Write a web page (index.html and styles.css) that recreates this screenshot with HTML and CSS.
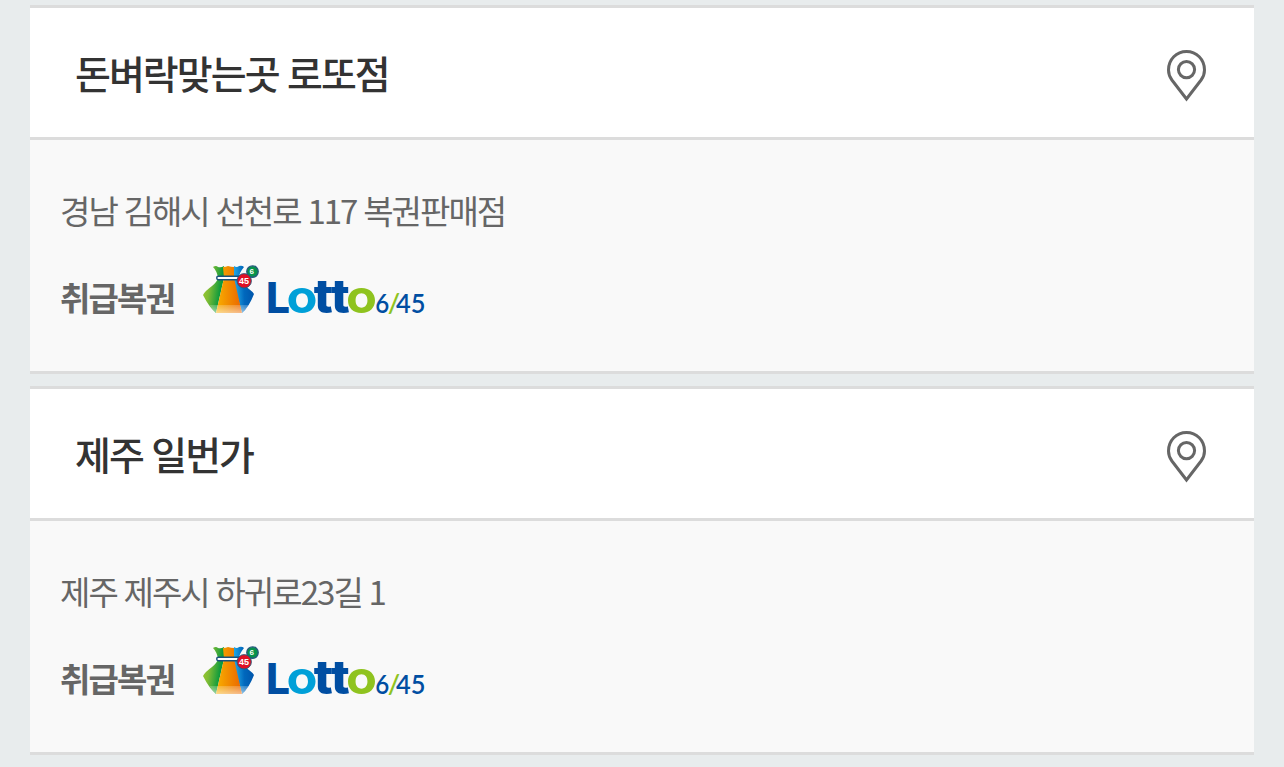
FILE: index.html
```html
<!DOCTYPE html>
<html lang="ko">
<head>
    <meta charset="UTF-8">
    <meta name="viewport" content="width=device-width, initial-scale=1.0">
    <title>로또 판매점</title>
    <link rel="stylesheet" href="styles.css">
</head>
<body>
    <!-- Shared icons -->
    <svg class="sprite" width="0" height="0">
        <defs>
            <linearGradient id="bagGreen" x1="0" y1="0" x2="1" y2="0.3">
                <stop offset="0" stop-color="#a5cb2c"/>
                <stop offset="0.4" stop-color="#7fbc35"/>
                <stop offset="0.9" stop-color="#0c9a3c"/>
            </linearGradient>
            <linearGradient id="bagOrange" x1="0" y1="0" x2="1" y2="0">
                <stop offset="0" stop-color="#f9b000"/>
                <stop offset="0.5" stop-color="#f18a00"/>
                <stop offset="1" stop-color="#ea6500"/>
            </linearGradient>
            <linearGradient id="bagBlue" x1="0" y1="0.1" x2="1" y2="0">
                <stop offset="0" stop-color="#2ab4ec"/>
                <stop offset="0.5" stop-color="#0068bd"/>
                <stop offset="1" stop-color="#0052a8"/>
            </linearGradient>
            <linearGradient id="bagFade" x1="0" y1="0" x2="0" y2="1">
                <stop offset="0" stop-color="#fff" stop-opacity="0.2"/>
                <stop offset="1" stop-color="#fff" stop-opacity="0.55"/>
            </linearGradient>
            <symbol id="pin" viewBox="0 0 40 52">
                <path d="M19.5 49 L4.9 30 C2.7 27 1.5 24 1.5 20 C1.5 9.5 9.5 1.5 19.5 1.5 C29.5 1.5 37.5 9.5 37.5 20 C37.5 24 36.3 27 34.1 30 Z" fill="none" stroke="#666" stroke-width="3"/>
                <circle cx="19.5" cy="19.6" r="8.1" fill="none" stroke="#666" stroke-width="3"/>
            </symbol>
            <symbol id="lotto" viewBox="0 0 224 50">
                <path d="M10 2 Q13 0 15 2 Q18 3 21 1 L21 13 L13 48 Q6 42 0 30 Q2 26 9 21 Q14 17 15 13 Q14 6 10 2 Z" fill="url(#bagGreen)"/>
                <path d="M31 1 Q34 3 36 1 Q39 0 41 2 Q36 8 36 13 Q39 19 46 24 Q50 27 51 29 Q46 42 39 48 L34 30 L29 12 Z" fill="url(#bagBlue)"/>
                <path d="M20 2 Q23 2 25 1 Q28 2 31 2 L31 13 L39 48 H13 L21 13 Z" fill="url(#bagOrange)"/>
                <path d="M6.5 40 H45.5 Q42 46 39 48 H13 Q9 45 6.5 40 Z" fill="url(#bagFade)"/>
                <rect x="13.7" y="11.3" width="25" height="3.4" rx="1.7" fill="#fff" stroke="#16527c" stroke-width="1.4"/>
                <circle cx="49.5" cy="6.6" r="5.7" fill="#07924b" stroke="#24597c" stroke-width="1.4"/>
                <circle cx="41.2" cy="15.8" r="7.2" fill="#df1025" stroke="#24597c" stroke-width="0.9"/>
                <text class="ball-num" x="48.7" y="9.2" font-size="8">6</text>
                <text class="ball-num" x="40.9" y="18.9" font-size="9">45</text>
                <g class="logo-word">
                    <text x="63" y="48" font-size="43" fill="#004ea2" textLength="24" lengthAdjust="spacingAndGlyphs">L</text>
                    <text class="round" x="83.4" y="47.5" font-size="46.5" fill="#00a0d8" textLength="31" lengthAdjust="spacingAndGlyphs">o</text>
                    <text x="110.8" y="47.6" font-size="47" fill="#004ea2" textLength="19" lengthAdjust="spacingAndGlyphs">t</text>
                    <text x="127.8" y="47.6" font-size="47" fill="#004ea2" textLength="19" lengthAdjust="spacingAndGlyphs">t</text>
                    <text class="round" x="143" y="47.5" font-size="46.5" fill="#8fc31f" textLength="31" lengthAdjust="spacingAndGlyphs">o</text>
                </g>
                <g class="logo-num">
                    <text x="172.3" y="48" fill="#004ea2" textLength="14" lengthAdjust="spacingAndGlyphs">6</text>
                    <text x="184.8" y="48" fill="#8fc31f">/</text>
                    <text x="193" y="48" fill="#004ea2" textLength="29.5" lengthAdjust="spacingAndGlyphs">45</text>
                </g>
            </symbol>
        </defs>
    </svg>

    <ul class="store-list">
        <li class="store">
            <div class="store-head">
                <h2>돈벼락맞는곳 로또점</h2>
                <a href="#" class="btn-map" aria-label="지도"><svg><use href="#pin"/></svg></a>
            </div>
            <div class="store-body">
                <p class="address">경남 김해시 선천로 117 복권판매점</p>
                <div class="goods">
                    <strong>취급복권</strong>
                    <svg class="logo"><use href="#lotto"/></svg>
                </div>
            </div>
        </li>
        <li class="store">
            <div class="store-head">
                <h2>제주 일번가</h2>
                <a href="#" class="btn-map" aria-label="지도"><svg><use href="#pin"/></svg></a>
            </div>
            <div class="store-body">
                <p class="address">제주 제주시 하귀로23길 1</p>
                <div class="goods">
                    <strong>취급복권</strong>
                    <svg class="logo"><use href="#lotto"/></svg>
                </div>
            </div>
        </li>
    </ul>
</body>
</html>
```
FILE: styles.css
```css
* {
    box-sizing: border-box;
}
body {
    margin: 0;
    background: #e8eced;
    font-family: "Noto Sans CJK KR", sans-serif;
    color: #666;
}
.sprite {
    display: block;
}
.store-list {
    margin: 0;
    padding: 5px 30px 0;
    list-style: none;
}
.store {
    height: 369px;
    margin-bottom: 12px;
    border-top: 3px solid #dcdcdc;
    border-bottom: 3px solid #dcdcdc;
    background: #f9f9f9;
}
.store-head {
    display: flex;
    justify-content: space-between;
    align-items: center;
    height: 132px;
    padding: 0 47px 0 45px;
    border-bottom: 3px solid #dcdcdc;
    background: #fff;
}
.store-head h2 {
    margin: 0 0 1px;
    font-size: 39px;
    font-weight: 500;
    line-height: 60px;
    letter-spacing: -0.05em;
    word-spacing: -0.6px;
    color: #333;
}
.btn-map {
    display: block;
    width: 40px;
    height: 52px;
    margin-top: 7px;
}
.btn-map svg {
    display: block;
    width: 40px;
    height: 52px;
}
.store-body {
    padding: 45px 30px 0;
}
.address {
    margin: 0;
    font-size: 33px;
    line-height: 50px;
    letter-spacing: -0.059em;
    word-spacing: -0.6px;
}
.goods {
    display: flex;
    align-items: flex-start;
    margin-top: 30px;
}
.goods strong {
    width: 143px;
    padding-top: 7px;
    font-size: 33px;
    font-weight: 700;
    line-height: 50px;
    letter-spacing: -0.055em;
}
.logo {
    display: block;
    width: 224px;
    height: 50px;
}
.logo-word {
    font-family: Inter, sans-serif;
    font-weight: 800;
}
.logo-word .round {
    font-weight: 700;
}
.logo-num {
    font-family: Lato, sans-serif;
    font-size: 27px;
    font-weight: 600;
}
.ball-num {
    font-family: "Liberation Sans", sans-serif;
    font-weight: 700;
    fill: #fff;
    text-anchor: middle;
}
```
